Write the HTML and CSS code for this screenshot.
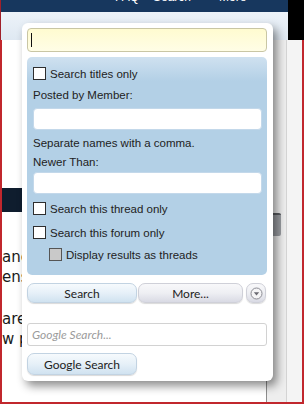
FILE: index.html
```html
<!DOCTYPE html>
<html lang="en">
<head>
    <meta charset="UTF-8">
    <title>Search</title>
    <link rel="stylesheet" href="styles.css">
</head>
<body>

<!-- page behind the menu -->
<div class="header">
    <div class="header-main">
        <div class="navbar">
            <span class="nav-top">FAQ</span>
            <span class="nav-search">Search</span>
            <span class="nav-more">More</span>
        </div>
        <div class="subbar"></div>
    </div>
    <div class="header-corner"></div>
</div>

<div class="content">
    <div class="main">
        <div class="block-head"></div>
        <div class="post-clip">
            <p class="post first">and</p>
            <p class="post">ens</p>
            <p class="post gap">are</p>
            <p class="post">w p</p>
        </div>
    </div>
    <div class="side">
        <div class="side-icon"></div>
    </div>
    <div class="side-edge"></div>
</div>

<!-- search menu -->
<div class="search-menu">
    <div class="query-wrap">
        <input type="text" class="query" />
        <span class="caret"></span>
    </div>

    <div class="options">
        <label class="check-row first-row"><span class="box"></span>Search titles only</label>
        <div class="field-label posted">Posted by Member:</div>
        <input type="text" class="field" />
        <div class="field-label hint">Separate names with a comma.</div>
        <div class="field-label newer">Newer Than:</div>
        <input type="text" class="field field-newer" />
        <label class="check-row thread-row"><span class="box"></span>Search this thread only</label>
        <label class="check-row forum-row"><span class="box"></span>Search this forum only</label>
        <label class="check-row sub-row"><span class="box disabled"></span>Display results as threads</label>
    </div>

    <div class="button-row">
        <button class="btn btn-blue search-btn">Search</button>
        <button class="btn btn-grey more-btn">More...</button>
        <button class="btn btn-grey toggle-btn">
            <svg width="13" height="13" viewBox="0 0 13 13">
                <circle cx="6.5" cy="6.5" r="5.5" fill="#f4f4f6" stroke="#8c8c94" stroke-width="1"/>
                <path d="M3.8 5.2 L9.2 5.2 L6.5 8.4 Z" fill="#6a6a72"/>
            </svg>
        </button>
    </div>

    <input type="text" class="google-query" placeholder="Google Search..." />
    <button class="btn btn-blue google-btn">Google Search</button>
</div>

</body>
</html>
```

FILE: styles.css
```css
body {
    margin: 0;
    width: 304px;
    height: 404px;
    overflow: hidden;
    position: relative;
    background: #fff;
    font-family: "Liberation Sans", Arial, sans-serif;
}

/* page behind the menu */
.header {
    display: flex;
    height: 40px;
}

.header-main {
    flex: 1;
    border-left: 1px solid #a0202a;
}

.navbar {
    height: 12px;
    background: #17375e;
    overflow: hidden;
    display: flex;
    padding-left: 114px;
}

.navbar span {
    color: #fff;
    font-size: 12px;
    line-height: 12px;
    margin-top: -9px;
}

.nav-search {
    margin-left: 14px;
}

.nav-more {
    margin-left: 28px;
}

.subbar {
    height: 28px;
    background: linear-gradient(#edf3f9, #dfe8f2);
}

.header-corner {
    width: 16px;
    background: #000;
}

.content {
    display: flex;
    height: 364px;
    box-sizing: border-box;
    border-left: 2px solid #c1272d;
    border-right: 2px solid #c1272d;
    border-bottom: 2px solid #c1272d;
}

.main {
    width: 264px;
    border-right: 1px solid #8c8c8c;
    overflow: hidden;
}

.block-head {
    margin-top: 148px;
    height: 24px;
    background: #0f1d2e;
}

.post-clip {
    width: 20px;
    overflow: hidden;
}

.post {
    margin: 0;
    font-family: "DejaVu Sans", sans-serif;
    font-size: 15px;
    line-height: 20px;
    color: #1a1a1a;
    white-space: nowrap;
}

.post.first {
    margin-top: 35px;
}

.post.gap {
    margin-top: 22px;
}

.side {
    width: 19px;
    background: #eeeeee;
    border-right: 1px solid #d4d4d4;
}

.side-icon {
    margin: 173px 0 0 4px;
    width: 10px;
    height: 21px;
    border-radius: 2px;
    background: #9a9da2;
    border-top: 2px solid #5a5d62;
}

.side-edge {
    flex: 1;
    background: #f4f4f4;
}

/* search menu */
.search-menu {
    position: absolute;
    left: 22px;
    top: 23px;
    width: 251px;
    height: 358px;
    box-sizing: border-box;
    padding: 5px 5px 0 5px;
    background: #fff;
    border-radius: 6px;
    box-shadow: 4px 5px 10px rgba(0, 0, 0, 0.45);
}

.query-wrap {
    position: relative;
}

.query {
    display: block;
    box-sizing: border-box;
    width: 240px;
    height: 24px;
    margin: 0;
    border: 1px solid #c9c6a4;
    border-radius: 4px;
    background: linear-gradient(#fffbd0, #fffde6);
    outline: none;
    padding: 0 3px;
    font-size: 12px;
}

.caret {
    position: absolute;
    left: 4px;
    top: 5px;
    width: 1px;
    height: 14px;
    background: #111;
}

.options {
    margin-top: 5px;
    width: 240px;
    height: 218px;
    box-sizing: border-box;
    padding: 0 6px;
    border-radius: 5px;
    background: linear-gradient(#cfe1f0 0px, #b3d0e6 24px, #b3d0e6 100%);
    color: #222;
    font-size: 11.5px;
    overflow: hidden;
}

.check-row {
    display: flex;
    align-items: center;
    height: 13px;
    gap: 4px;
}

.box {
    width: 11px;
    height: 11px;
    border: 1px solid #2e2e2e;
    background: #fff;
    flex-shrink: 0;
}

.box.disabled {
    background: #c9c9c9;
    border-color: #555;
}

.first-row {
    margin-top: 10px;
}

.thread-row {
    margin-top: 8px;
}

.forum-row {
    margin-top: 11px;
}

.sub-row {
    margin-top: 9px;
    margin-left: 16px;
}

.field-label {
    line-height: 16px;
}

.posted {
    margin-top: 7px;
}

.hint {
    margin-top: 5px;
}

.newer {
    margin-top: 3px;
}

.field {
    display: block;
    box-sizing: border-box;
    width: 229px;
    height: 22px;
    margin: 5px 0 0 0;
    border: 1px solid #c3d8ea;
    border-radius: 4px;
    background: #fff;
    outline: none;
}

.field-newer {
    margin-top: 2px;
}

.button-row {
    display: flex;
    margin-top: 8px;
    height: 20px;
}

.btn {
    box-sizing: border-box;
    height: 20px;
    padding: 0;
    border-radius: 7px;
    font-family: Lato, "Liberation Sans", sans-serif;
    font-size: 12px;
    color: #222;
    cursor: pointer;
}

.btn-blue {
    border: 1px solid #c2d3e2;
    background: linear-gradient(#f6fafd, #e6f0f8 50%, #d0e2f0);
    box-shadow: 0 1px 1px rgba(0, 0, 0, 0.15);
}

.btn-grey {
    border: 1px solid #cfd0d8;
    background: linear-gradient(#f8f8fa, #eeeff3 50%, #d9dae4);
    box-shadow: 0 1px 1px rgba(0, 0, 0, 0.15);
}

.search-btn {
    width: 110px;
}

.more-btn {
    width: 105px;
    margin-left: 1px;
}

.toggle-btn {
    width: 20px;
    margin-left: 3px;
    display: flex;
    align-items: center;
    justify-content: center;
}

.google-query {
    display: block;
    box-sizing: border-box;
    width: 240px;
    height: 23px;
    margin: 20px 0 0 0;
    padding: 0 4px;
    border: 1px solid #d2d2d2;
    border-radius: 3px;
    background: #fff;
    outline: none;
    font-family: Lato, "Liberation Sans", sans-serif;
    font-size: 12px;
}

.google-query::placeholder {
    color: #9b9b9b;
    font-style: italic;
}

.google-btn {
    display: block;
    margin-top: 7px;
    width: 110px;
    height: 22px;
}
```
